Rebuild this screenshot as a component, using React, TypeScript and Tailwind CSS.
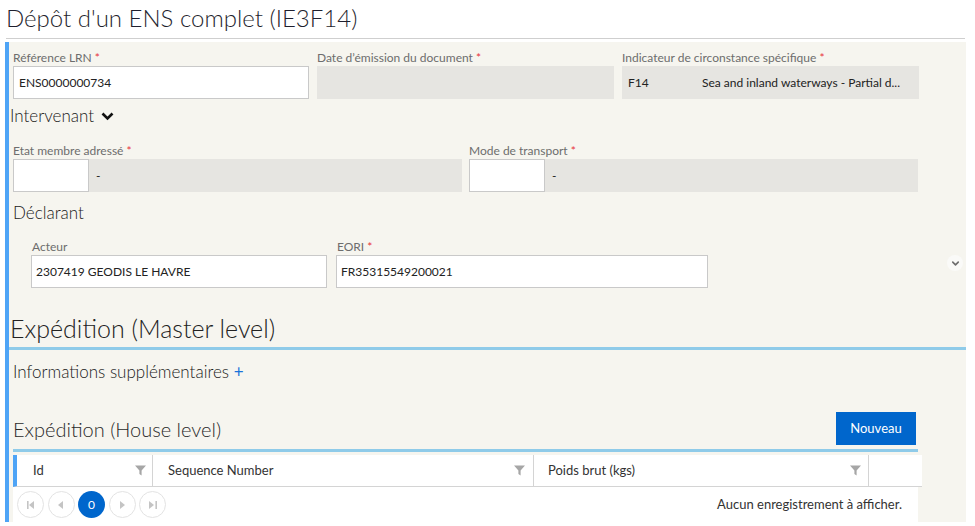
import { ChevronDown } from 'lucide-react';

// Small field label with optional required marker
function Label({ text, required }: { text: string; required?: boolean }) {
  return (
    <div className="h-[17px] leading-[17px] text-[12px] text-[#6d6d6d] whitespace-nowrap">
      {text}
      {required && <span className="text-[#e8343a]"> *</span>}
    </div>
  );
}

function FilterIcon() {
  return (
    <svg width="11" height="11" viewBox="0 0 11 11" className="shrink-0">
      <path d="M0 0.5 H11 L6.6 5.5 V10.5 L4.4 9 V5.5 Z" fill="#a6a6a6" />
    </svg>
  );
}

function PagerButton({ children, active }: { children: React.ReactNode; active?: boolean }) {
  return (
    <div
      className={`w-[27px] h-[27px] rounded-full flex items-center justify-center text-[12px] ${
        active ? 'bg-[#0066cc] text-white' : 'border border-[#e3e3e3] text-[#c4c4c4]'
      }`}
    >
      {children}
    </div>
  );
}

function CodeLookup() {
  return (
    <div className="flex-1 flex h-[33px] bg-[#e6e5e1]">
      <div className="w-[76px] h-[33px] bg-white border border-[#c9c9c9]" />
      <div className="pl-[7px] leading-[33px] text-[12px] text-[#222]">-</div>
    </div>
  );
}

export default function App() {
  return (
    <div className="relative w-[975px] h-[526px] bg-white overflow-hidden font-['Lato','Open_Sans',sans-serif] text-[#222]">
      {/* Page title */}
      <div className="ml-[6px] w-[959px] h-[39px] border-b border-[#cfcfcf] flex items-end pb-[6px]">
        <h1 className="text-[24px] leading-[28px] font-light text-[#1f1f2e]">Dépôt d'un ENS complet (IE3F14)</h1>
      </div>

      <div className="ml-[5px] mt-[3px] w-[961px] h-[480px] border-l-4 border-[#4ea4f6] bg-[#f6f5ef] pt-[7px]">
        {/* Row 1 */}
        <div className="pl-[4px] flex gap-[8px] w-[913px]">
          <div className="w-[296px]">
            <Label text="Référence LRN" required />
            <div className="h-[33px] bg-white border border-[#c9c9c9] px-[5px] leading-[31px] text-[12px]">ENS0000000734</div>
          </div>
          <div className="w-[297px]">
            <Label text="Date d’émission du document" required />
            <div className="h-[33px] bg-[#e6e5e1]" />
          </div>
          <div className="w-[297px]">
            <Label text="Indicateur de circonstance spécifique" required />
            <div className="h-[33px] bg-[#e6e5e1] pl-[6px] pr-[6px] flex items-center text-[12px] whitespace-nowrap">
              <span className="w-[74px] shrink-0">F14</span>
              <span>Sea and inland waterways - Partial d...</span>
            </div>
          </div>
        </div>

        {/* Intervenant */}
        <div className="mt-[6px] ml-[1px] flex items-center gap-[7px] h-[22px] text-[17px] font-light text-[#1a1a1a]">
          Intervenant
          <svg width="13" height="9" viewBox="0 0 13 9">
            <path d="M1.5 1.5 L6.5 6.5 L11.5 1.5" stroke="#111" strokeWidth="2.6" fill="none" />
          </svg>
        </div>

        <div className="mt-[15px] pl-[4px] flex gap-[7px] w-[909px]">
          <div className="flex-1 flex flex-col">
            <Label text="Etat membre adressé" required />
            <CodeLookup />
          </div>
          <div className="flex-1 flex flex-col">
            <Label text="Mode de transport" required />
            <CodeLookup />
          </div>
        </div>

        {/* Déclarant */}
        <div className="mt-[10px] pl-[4px] h-[22px] leading-[22px] text-[17px] font-light text-[#1a1a1a]">Déclarant</div>
        <div className="mt-[14px] pl-[22px] flex gap-[9px]">
          <div className="w-[296px]">
            <div className="pl-[1px]"><Label text="Acteur" /></div>
            <div className="h-[33px] bg-white border border-[#c9c9c9] px-[4px] leading-[31px] text-[12px]">2307419 GEODIS LE HAVRE</div>
          </div>
          <div className="w-[372px]">
            <div className="pl-[1px]"><Label text="EORI" required /></div>
            <div className="h-[33px] bg-white border border-[#c9c9c9] px-[4px] leading-[31px] text-[12px]">FR35315549200021</div>
          </div>
        </div>

        {/* Master level */}
        <div className="mt-[24px] ml-[1px] h-[32px] leading-[32px] text-[25px] font-light text-[#222]">Expédition (Master level)</div>
        <div className="mt-[3px] h-[3px] bg-[#8fcbe9]" />

        <div className="mt-[11px] pl-[4px] h-[22px] leading-[22px] text-[17px] font-light text-[#1a1a1a]">
          Informations supplémentaires <span className="font-normal text-[#1a73d9]">+</span>
        </div>

        {/* House level */}
        <div className="mt-[29px] ml-[4px] w-[905px] flex items-center justify-between h-[33px] pr-[2px]">
          <div className="text-[20px] font-light text-[#2a2a2a]">Expédition (House level)</div>
          <div className="w-[80px] h-[33px] bg-[#0066cc] text-white text-[13px] flex items-center justify-center">Nouveau</div>
        </div>
        <div className="mt-[4px] ml-[4px] w-[905px] h-[3px] bg-[#8fcbe9]" />

        <div className="mt-[3px] ml-[4px] w-[909px]">
          <div className="h-[32px] bg-white border-l-4 border-[#4ea4f6] border-b border-b-[#d4d4d4] flex text-[13px] text-[#333]">
            <div className="w-[136px] flex items-center justify-between pl-[16px] pr-[6px] border-r border-[#d4d4d4]">
              Id <FilterIcon />
            </div>
            <div className="w-[381px] flex items-center justify-between pl-[15px] pr-[8px] border-r border-[#d4d4d4]">
              Sequence Number <FilterIcon />
            </div>
            <div className="w-[335px] flex items-center justify-between pl-[14px] pr-[7px] border-r border-[#d4d4d4]">
              Poids brut (kgs) <FilterIcon />
            </div>
            <div className="flex-1" />
          </div>
          <div className="w-[905px] h-[35px] bg-white flex items-center justify-between pl-[4px] pr-[16px]">
            <div className="flex gap-[3.5px]">
              <PagerButton>
                <svg width="8" height="8" viewBox="0 0 8 8"><path d="M0 0h1.6v8H0z M7 0v8L2 4z" fill="#c4c4c4" /></svg>
              </PagerButton>
              <PagerButton>
                <svg width="6" height="8" viewBox="0 0 6 8"><path d="M5 0v8L0 4z" fill="#c4c4c4" /></svg>
              </PagerButton>
              <PagerButton active>0</PagerButton>
              <PagerButton>
                <svg width="6" height="8" viewBox="0 0 6 8"><path d="M1 0v8l5-4z" fill="#c4c4c4" /></svg>
              </PagerButton>
              <PagerButton>
                <svg width="8" height="8" viewBox="0 0 8 8"><path d="M0 0v8l5-4z M6.4 0H8v8H6.4z" fill="#c4c4c4" /></svg>
              </PagerButton>
            </div>
            <div className="text-[13px] text-[#333]">Aucun enregistrement à afficher.</div>
          </div>
        </div>
      </div>

      {/* scroll hint */}
      <div className="absolute left-[947px] top-[255px] w-[16px] h-[16px] rounded-full bg-[#fafaf8] flex items-center justify-center">
        <ChevronDown size={11} strokeWidth={3.5} className="text-[#6e6e6e]" />
      </div>
    </div>
  );
}
